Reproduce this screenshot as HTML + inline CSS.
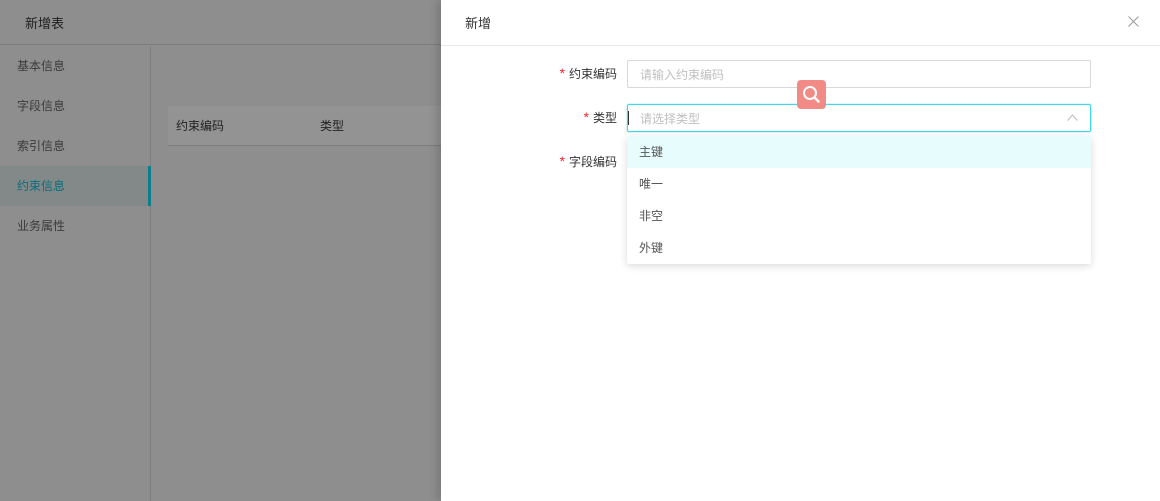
<!DOCTYPE html>
<html><head><meta charset="utf-8"><style>
*{box-sizing:border-box;margin:0;padding:0}
body{width:1160px;height:501px;overflow:hidden;position:relative;font-family:"Liberation Sans","Noto Sans CJK SC",sans-serif;font-size:12px;background:#8c8c8c}
.abs{position:absolute}
.left{left:0;top:0;width:441px;height:501px;background:#8e8e8e}
.lh{left:0;top:0;width:441px;height:45px;border-bottom:1px solid #7c7c7c;color:#1f1f1f;font-size:13px;padding:13px 0 0 25px}
.side{left:0;top:46px;width:151px;height:455px;border-right:1px solid #7e7e7e}
.it{position:absolute;left:0;width:151px;height:40px;line-height:40px;padding-left:17px;color:#3b3b3b}
.act{background:#838888;color:#0a6f7c}
.act:after{content:"";position:absolute;right:0;top:0;width:3px;height:40px;background:#0b7f8c}
.th{left:168px;top:106px;width:273px;height:40px;background:#939393;border-bottom:1px solid #7c7c7c;color:#222;line-height:40px}
.drawer{left:441px;top:0;width:719px;height:501px;background:#fff;box-shadow:-4px 0 8px rgba(0,0,0,.15)}
.dh{left:0;top:0;width:719px;height:46px;border-bottom:1px solid #e8e8e8;font-size:13px;color:#333;padding:13px 0 0 24px}
.lab{position:absolute;width:200px;text-align:right;color:#333;font-size:12px}
.lab b{color:#f5222d;font-weight:normal;margin-right:4px;font-size:14px}
.inp{position:absolute;left:186px;width:464px;height:28px;border:1px solid #d9d9d9;border-radius:2px;color:#bfbfbf;padding:5px 0 0 12px}
.dd{left:186px;top:136px;width:464px;height:128px;background:#fff;box-shadow:0 2px 8px rgba(0,0,0,.15);border-radius:2px}
.op{height:32px;line-height:32px;padding-left:12px;color:#555}
</style></head><body>
<div class="abs left"></div>
<div class="abs lh">新增表</div>
<div class="abs side">
<div class="it" style="top:0">基本信息</div>
<div class="it" style="top:40px">字段信息</div>
<div class="it" style="top:80px">索引信息</div>
<div class="it act" style="top:120px">约束信息</div>
<div class="it" style="top:160px">业务属性</div>
</div>
<div class="abs th"><span style="position:absolute;left:8px">约束编码</span><span style="position:absolute;left:152px">类型</span></div>
<div class="abs drawer">
<div class="abs dh">新增</div>
<svg class="abs" style="left:687px;top:16px" width="11" height="11" viewBox="0 0 11 11"><path d="M0.5 0.5 L10.5 10.5 M10.5 0.5 L0.5 10.5" stroke="#999" stroke-width="1"/></svg>
<div class="lab" style="left:-24px;top:65px"><b>*</b>约束编码</div>
<div class="inp" style="top:60px">请输入约束编码</div>
<div class="lab" style="left:-24px;top:109px"><b>*</b>类型</div>
<div class="inp" style="top:104px;border-color:#3fd7ea;box-shadow:0 0 0 1px rgba(63,215,234,.2)"><span style="position:absolute;left:0;top:6px;width:1px;height:14px;background:#333"></span>请选择类型
<svg class="abs" style="right:12px;top:9px" width="11" height="7" viewBox="0 0 11 7"><path d="M0.5 6.5 L5.5 1 L10.5 6.5" fill="none" stroke="#bbb" stroke-width="1"/></svg></div>
<div class="lab" style="left:-24px;top:153px"><b>*</b>字段编码</div>
<div class="abs dd">
<div class="op" style="background:#e6fcfd">主键</div>
<div class="op">唯一</div>
<div class="op">非空</div>
<div class="op">外键</div>
</div>
<div class="abs" style="left:356px;top:80px;width:29px;height:29px;background:#f28b86;border-radius:4px">
<svg width="29" height="29" viewBox="0 0 29 29"><circle cx="13" cy="13" r="6" fill="none" stroke="#fff" stroke-width="2"/><path d="M17.5 17.5 L21.5 21.5" stroke="#fff" stroke-width="2.5" stroke-linecap="round"/></svg>
</div>
</div>
</body></html>
